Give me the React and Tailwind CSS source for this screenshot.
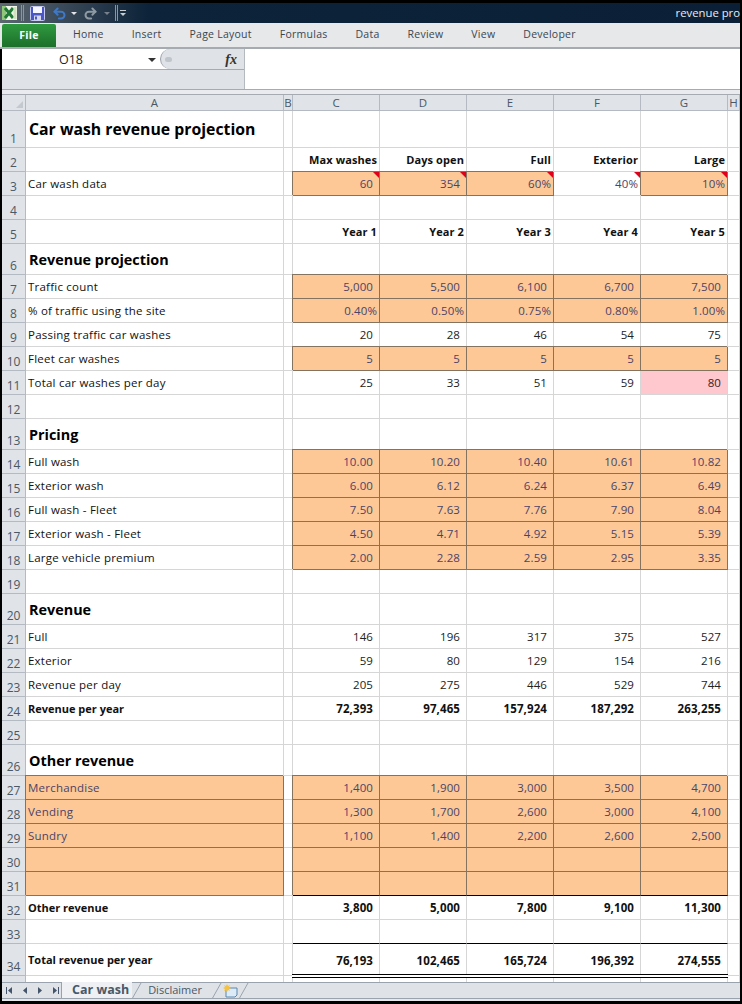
import { Undo2, Redo2 } from 'lucide-react';

const rowHeights = { 1: 37, 6: 31, 13: 31, 20: 31, 26: 31, 34: 32 };

const rows = [
  { n: 1, title: 'Car wash revenue projection', big: true },
  { n: 2, vals: ['Max washes', 'Days open', 'Full', 'Exterior', 'Large'], head: true },
  { n: 3, label: 'Car wash data', vals: ['60', '354', '60%', '40%', '10%'], input: true, note: true },
  { n: 4 },
  { n: 5, vals: ['Year 1', 'Year 2', 'Year 3', 'Year 4', 'Year 5'], head: true },
  { n: 6, title: 'Revenue projection' },
  { n: 7, label: 'Traffic count', vals: ['5,000', '5,500', '6,100', '6,700', '7,500'], input: true },
  { n: 8, label: '% of traffic using the site', vals: ['0.40%', '0.50%', '0.75%', '0.80%', '1.00%'], input: true, tight: true },
  { n: 9, label: 'Passing traffic car washes', vals: ['20', '28', '46', '54', '75'] },
  { n: 10, label: 'Fleet car washes', vals: ['5', '5', '5', '5', '5'], input: true },
  { n: 11, label: 'Total car washes per day', vals: ['25', '33', '51', '59', '80'], pinkLast: true },
  { n: 12 },
  { n: 13, title: 'Pricing' },
  { n: 14, label: 'Full wash', vals: ['10.00', '10.20', '10.40', '10.61', '10.82'], input: true },
  { n: 15, label: 'Exterior wash', vals: ['6.00', '6.12', '6.24', '6.37', '6.49'], input: true },
  { n: 16, label: 'Full wash - Fleet', vals: ['7.50', '7.63', '7.76', '7.90', '8.04'], input: true },
  { n: 17, label: 'Exterior wash - Fleet', vals: ['4.50', '4.71', '4.92', '5.15', '5.39'], input: true },
  { n: 18, label: 'Large vehicle premium', vals: ['2.00', '2.28', '2.59', '2.95', '3.35'], input: true },
  { n: 19 },
  { n: 20, title: 'Revenue' },
  { n: 21, label: 'Full', vals: ['146', '196', '317', '375', '527'] },
  { n: 22, label: 'Exterior', vals: ['59', '80', '129', '154', '216'] },
  { n: 23, label: 'Revenue per day', vals: ['205', '275', '446', '529', '744'] },
  { n: 24, label: 'Revenue per year', vals: ['72,393', '97,465', '157,924', '187,292', '263,255'], bold: true },
  { n: 25 },
  { n: 26, title: 'Other revenue' },
  { n: 27, label: 'Merchandise', vals: ['1,400', '1,900', '3,000', '3,500', '4,700'], input: true, inputLabel: true },
  { n: 28, label: 'Vending', vals: ['1,300', '1,700', '2,600', '3,000', '4,100'], input: true, inputLabel: true },
  { n: 29, label: 'Sundry', vals: ['1,100', '1,400', '2,200', '2,600', '2,500'], input: true, inputLabel: true },
  { n: 30, vals: ['', '', '', '', ''], input: true, inputLabel: true },
  { n: 31, vals: ['', '', '', '', ''], input: true, inputLabel: true, blackBottom: true },
  { n: 32, label: 'Other revenue', vals: ['3,800', '5,000', '7,800', '9,100', '11,300'], bold: true },
  { n: 33, vals: ['', '', '', '', ''], blackBottom: true },
  { n: 34, label: 'Total revenue per year', vals: ['76,193', '102,465', '165,724', '196,392', '274,555'], bold: true, doubleBottom: true },
];

const gridClass = 'grid grid-cols-[24px_258px_9px_87px_87px_87px_87px_87px_12px]';
const inputCell = 'bg-[#fdc896] text-[#4a4468] border-r border-b border-[#85735f] shadow-[-1px_-1px_0_#85735f]';
const plainCell = 'border-r border-b border-[#d6d6d6]';

function RowHead({ children, h }) {
  return (
    <div style={{ height: h }} className="flex items-end justify-center border-r border-b border-[#b4bac2] bg-[#e0e3e7] text-[12px] leading-[16px] text-[#4a5866]">
      {children}
    </div>
  );
}

function Row({ row }) {
  const h = rowHeights[row.n] || 24;
  const labelClass = row.inputLabel ? inputCell : `${plainCell} text-[#111]`;
  return (
    <>
      <RowHead h={h}>{row.n}</RowHead>
      <div className={`flex items-center pl-[2px] ${labelClass} ${row.bold ? 'pt-[1px] text-[11px] font-bold' : 'tracking-[0.22px]'} ${row.title ? 'pt-[1px]' : ''}`}>
        {row.title ? (
          <span className={`pl-[1px] font-bold tracking-normal text-black ${row.big ? 'text-[15.8px]' : 'text-[14.4px]'}`}>{row.title}</span>
        ) : row.label}
      </div>
      <div className={plainCell} />
      {[0, 1, 2, 3, 4].map((i) => {
        const val = row.vals ? row.vals[i] : '';
        // F3 is the one cell in the data row that is not an input
        const isInput = row.input && !(row.n === 3 && i === 3);
        const isPink = row.pinkLast && i === 4;
        const tight = row.tight || row.head || (row.n === 3 && i >= 2);
        let cls = plainCell;
        if (isInput) cls = inputCell;
        if (isPink) cls = 'bg-[#ffc7ce] border-r border-b border-[#d6d6d6] text-[#3a1a1a]';
        if (row.n === 3 && i === 3) cls = `${plainCell} text-[#4a4468]`;
        if (row.blackBottom) cls += ' border-b-black';
        if (row.doubleBottom) cls = 'border-r border-[#d6d6d6]';
        return (
          <div key={i} className={`relative flex items-center justify-end tracking-[0.1px] ${tight ? 'pr-[2px]' : 'pr-[6px]'} ${row.bold ? 'pt-[1px] font-bold text-[#111]' : ''} ${row.head ? 'pt-[1px] text-[11px] font-bold text-[#111]' : ''} ${cls}`}>
            {val}
            {row.note && <span className="absolute right-0 top-0 h-0 w-0 border-l-[6px] border-t-[6px] border-l-transparent border-t-[#e0001a]" />}
            {row.doubleBottom && <span className="absolute inset-x-[-1px] bottom-[-2px] h-[4px] border-y border-black bg-white" />}
          </div>
        );
      })}
      <div className={plainCell} />
    </>
  );
}

function ExcelLogo() {
  return (
    <svg width="15" height="14" viewBox="0 0 15 14">
      <rect width="15" height="14" fill="#f1f6e8" />
      <rect width="4" height="14" fill="#8fc67a" />
      <path d="M3 2l8 10M11 2l-8 10" stroke="#1f7a35" strokeWidth="3" />
      <rect x="11.5" y="1" width="3" height="12" fill="#cfe3c0" />
    </svg>
  );
}

function SaveIcon() {
  return (
    <svg width="15" height="15" viewBox="0 0 15 15">
      <rect x="0.5" y="0.5" width="14" height="14" rx="1" fill="#4a56c4" stroke="#c3c6ee" />
      <rect x="3" y="1" width="9" height="6" fill="#f4f5ff" />
      <rect x="4" y="9.5" width="7" height="5" fill="#d4d7ee" />
      <rect x="5" y="10.5" width="2" height="3" fill="#4a56c4" />
    </svg>
  );
}

function NewSheetIcon() {
  return (
    <svg width="15" height="14" viewBox="0 0 15 14">
      <path d="M3 4h11v7l-2 2H3z" fill="#dcebf7" stroke="#5b87ad" />
      <path d="M4 0l1 2 2-1-1 2 2 1-2 1 1 2-2-1-1 2-1-2-2 1 1-2-2-1 2-1-1-2 2 1z" fill="#f5c242" />
    </svg>
  );
}

function NavArrow({ dir, bar }) {
  return (
    <svg width="8" height="9" viewBox="0 0 8 9" fill="#44546a">
      {dir === 'left' ? <path d="M6 1v7L2 4.5z" /> : <path d="M2 1v7l4-3.5z" />}
      {bar && <rect x={dir === 'left' ? 0 : 7} y="1" width="1" height="7" />}
    </svg>
  );
}

function TabSlant() {
  return (
    <svg width="10" height="16" viewBox="0 0 10 16" className="shrink-0">
      <path d="M0 16L9 0" stroke="#9aa3ad" fill="none" />
    </svg>
  );
}

export default function App() {
  return (
    <div className="flex h-[1004px] w-[742px] flex-col overflow-hidden bg-black pr-[2px] pt-[3px] font-['Open_Sans',sans-serif] text-[11.5px] text-[#222]">
      {/* title bar */}
      <div className="flex h-[20px] items-center justify-between overflow-hidden bg-gradient-to-r from-[#5d6771] via-[#0c2339] via-[20%] to-[#0b2036] pl-[2px]">
        <div className="flex items-center">
          <ExcelLogo />
          <span className="ml-[4px] mr-[6px] h-[16px] w-[3px] border-x border-[#8b95a0]" />
          <SaveIcon />
          <Undo2 size={15} strokeWidth={3.2} className="ml-[7px] text-[#3f78c6]" />
          <span className="ml-[4px] h-0 w-0 border-x-[3px] border-t-[3px] border-x-transparent border-t-[#e2e6ea]" />
          <Redo2 size={15} strokeWidth={3.2} className="ml-[6px] text-[#8f9aa3]" />
          <span className="ml-[6px] h-0 w-0 border-x-[3px] border-t-[3px] border-x-transparent border-t-[#77828c]" />
          <span className="ml-[5px] h-[16px] w-[3px] border-x border-[#8b95a0]" />
          <span className="ml-[2px] h-[7px] w-[6px] border-t border-[#c8ced4]">
            <span className="mt-[2px] block h-0 w-0 border-x-[3px] border-t-[3px] border-x-transparent border-t-[#c8ced4]" />
          </span>
        </div>
        <span className="whitespace-nowrap text-[11.3px] leading-none text-[#e8ecf0]">revenue pro</span>
      </div>

      {/* ribbon tabs */}
      <div className="flex h-[26px] items-end border-b-2 border-[#a6abb1] bg-[#e6e8ea] text-[10.5px] tracking-[0.25px] text-[#3c4650]">
        <div className="ml-[2px] flex h-[23px] w-[54px] items-center justify-center rounded-t-[2px] bg-gradient-to-b from-[#2f9a3f] to-[#1c6f2b] font-bold text-white">File</div>
        <div className="ml-[17px] flex h-[23px] items-center gap-7 pb-[1px]">
          <span>Home</span>
          <span>Insert</span>
          <span>Page Layout</span>
          <span>Formulas</span>
          <span>Data</span>
          <span>Review</span>
          <span>View</span>
          <span>Developer</span>
        </div>
      </div>

      {/* formula bar */}
      <div className="ml-[2px] flex h-[41px] border-b border-[#a6abb1] bg-white">
        <div className="flex w-[243px] flex-col border-r border-[#b4b9bf] bg-[#dfe2e6]">
          <div className="flex h-[21px] items-center border-b border-[#a6abb1]">
            <div className="flex h-full w-[158px] items-center bg-white">
              <span className="ml-[57px] pt-[3px] text-[12.5px] text-[#222]">O18</span>
              <span className="ml-[65px] mt-[1px] h-0 w-0 border-x-[4px] border-t-[4px] border-x-transparent border-t-[#333]" />
            </div>
            <div className="flex h-full flex-1 items-center justify-between bg-white">
              <span className="flex h-full w-[16px] items-center justify-center rounded-l-full border-l border-[#9ba1a8] bg-[#dfe2e6]">
                <span className="h-[5px] w-[7px] rounded-full bg-[#c0c5cb]" />
              </span>
              <span className="flex h-full flex-1 items-center justify-end bg-[#dfe2e6] pr-[7px] pt-[1px] font-['Liberation_Serif',serif] text-[14px] font-bold italic text-[#333]">fx</span>
            </div>
          </div>
        </div>
      </div>
      <div className="ml-[2px] h-[5px] border-b border-[#a6abb1] bg-[#e9ebee]" />

      {/* sheet */}
      <div className="ml-[2px] h-[887px] overflow-hidden bg-white">
        <div className={gridClass}>
          <div className="flex h-[16px] items-end justify-end border-r border-b border-[#b4bac2] bg-[#e0e3e7] p-[2px]">
            <span className="h-0 w-0 border-b-[7px] border-l-[7px] border-b-[#c4c9cf] border-l-transparent" />
          </div>
          {['A', 'B', 'C', 'D', 'E', 'F', 'G', 'H'].map((c) => (
            <div key={c} className="flex h-[16px] items-center justify-center border-r border-b border-[#b4bac2] bg-[#e0e3e7] text-[11.5px] text-[#4a5866]">{c}</div>
          ))}
          {rows.map((row) => (
            <Row key={row.n} row={row} />
          ))}
          <RowHead h={9} />
          {[0, 1, 2, 3, 4, 5, 6, 7].map((i) => (
            <div key={i} className={`h-[9px] ${plainCell}`} />
          ))}
        </div>
      </div>

      {/* sheet tabs */}
      <div className="ml-[2px] flex h-[16px] items-center border-t border-[#9aa3ad] bg-[#dfe3e8] text-[#4a5866]">
        <div className="flex h-full w-[60px] items-center gap-[7px] border-r border-[#9aa3ad] pl-[4px]">
          <NavArrow dir="left" bar />
          <NavArrow dir="left" />
          <NavArrow dir="right" />
          <NavArrow dir="right" bar />
        </div>
        <div className="-mt-px flex h-[16px] items-center bg-[#eef0f3] pl-[10px] pr-[3px] text-[12.5px] font-bold">Car wash</div>
        <TabSlant />
        <div className="flex h-full items-center pl-[6px] pr-[10px] text-[11px]">Disclaimer</div>
        <TabSlant />
        <div className="flex h-full items-center pl-[1px] pr-[1px]"><NewSheetIcon /></div>
        <TabSlant />
      </div>
      <div className="ml-[2px] h-[3px] border-t border-[#9aa3ad] bg-[#e6e8ea]" />
    </div>
  );
}
